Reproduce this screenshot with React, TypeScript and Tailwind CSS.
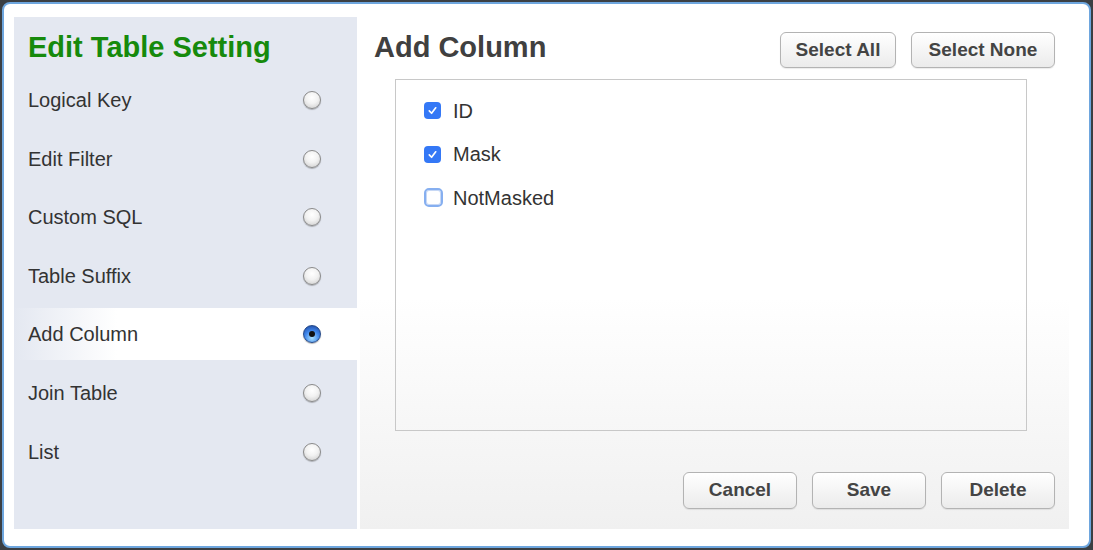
import React from "react"

const sections = ["Logical Key", "Edit Filter", "Custom SQL", "Table Suffix", "Add Column", "Join Table", "List"]

const columns = [
  { name: "ID", checked: true },
  { name: "Mask", checked: true },
  { name: "NotMasked", checked: false },
]

function Radio({ on }: { on: boolean }) {
  if (on) {
    return (
      <span className="flex h-[18px] w-[18px] items-center justify-center rounded-full border border-[#23498a] bg-[radial-gradient(circle_at_50%_75%,#a8e0ff_0%,#3f86ea_50%,#1a3f96_100%)] shadow-[0_1px_1px_rgba(0,0,0,0.3)]">
        <span className="h-[6px] w-[6px] rounded-full bg-[#111]" />
      </span>
    )
  }
  return (
    <span className="h-[18px] w-[18px] rounded-full border border-[#8a8a8a] bg-[radial-gradient(circle_at_50%_35%,#ffffff_0%,#f2f2f2_45%,#c9c9c9_100%)] shadow-[0_1px_1px_rgba(0,0,0,0.25)]" />
  )
}

function Checkbox({ checked }: { checked: boolean }) {
  if (checked) {
    return (
      <span className="flex h-[17px] w-[17px] items-center justify-center rounded-[4px] bg-[#3478f6]">
        <svg width="11" height="11" viewBox="0 0 12 12" fill="none">
          <path d="M2.5 6.5 L5 9 L9.5 3" stroke="white" strokeWidth="1.8" strokeLinecap="round" strokeLinejoin="round" />
        </svg>
      </span>
    )
  }
  return <span className="h-[19px] w-[19px] rounded-[5px] border-[2px] border-[#86aff0] bg-white shadow-[inset_0_0_0_1px_#c7d8f5]" />
}

function Button({ label, className }: { label: string; className: string }) {
  return (
    <button className={`rounded-[6px] border border-[#b3b3b3] bg-[linear-gradient(#ffffff,#ebebeb)] text-[19px] font-bold text-[#444] shadow-[0_1px_1px_rgba(0,0,0,0.08)] ${className}`}>
      {label}
    </button>
  )
}

export default function App() {
  const font = { fontFamily: '"Liberation Sans", Arial, sans-serif' }

  return (
    <div className="h-[550px] w-[1093px] bg-[#3b3f43] p-[2px]" style={font}>
      <div className="flex h-full rounded-[8px] border-[2px] border-[#6ea6de] bg-white pb-[17px] pl-[10px] pr-[20px] pt-[13px]">
        {/* Sidebar */}
        <div className="flex w-[343px] flex-col bg-[#e4e8f1]">
          <h1 className="ml-[14px] mt-[13px] text-[29px] font-bold leading-[34px] text-[#168a0c]">Edit Table Setting</h1>
          <div className="mt-[10px] flex flex-col gap-[6.6px]">
            {sections.map((s) => {
              const on = s === "Add Column"
              return (
                <div
                  key={s}
                  className={`flex h-[52px] items-center justify-between pl-[14px] pr-[36px] ${on ? "bg-[linear-gradient(90deg,#e4e8f1_0%,#ffffff_30%,#ffffff_100%)]" : ""}`}
                >
                  <span className="text-[20px] text-[#333]">{s}</span>
                  <Radio on={on} />
                </div>
              )
            })}
          </div>
        </div>

        {/* Main panel */}
        <div className="ml-[3px] flex flex-1 flex-col bg-[linear-gradient(#ffffff_0%,#ffffff_55%,#f0f0f0_100%)] px-[14px] pb-[20px]">
          <div className="flex items-start justify-between pt-[13px]">
            <h2 className="text-[29px] font-bold leading-[34px] text-[#404040]">Add Column</h2>
            <div className="mt-[2px] flex gap-[15px]">
              <Button label="Select All" className="h-[36px] w-[116px]" />
              <Button label="Select None" className="h-[36px] w-[144px]" />
            </div>
          </div>

          <div className="ml-[21px] mt-[11px] h-[352px] w-[632px] border border-[#c8c8c8] pl-[28px] pt-[19px]">
            <div className="flex flex-col gap-[20.5px]">
              {columns.map((c) => (
                <label key={c.name} className="flex h-[23px] items-center">
                  <span className="flex w-[29px] items-center">
                    <Checkbox checked={c.checked} />
                  </span>
                  <span className="text-[20px] text-[#333]">{c.name}</span>
                </label>
              ))}
            </div>
          </div>

          <div className="mt-auto flex justify-end gap-[15px]">
            <Button label="Cancel" className="h-[37px] w-[114px]" />
            <Button label="Save" className="h-[37px] w-[114px]" />
            <Button label="Delete" className="h-[37px] w-[114px]" />
          </div>
        </div>
      </div>
    </div>
  )
}
